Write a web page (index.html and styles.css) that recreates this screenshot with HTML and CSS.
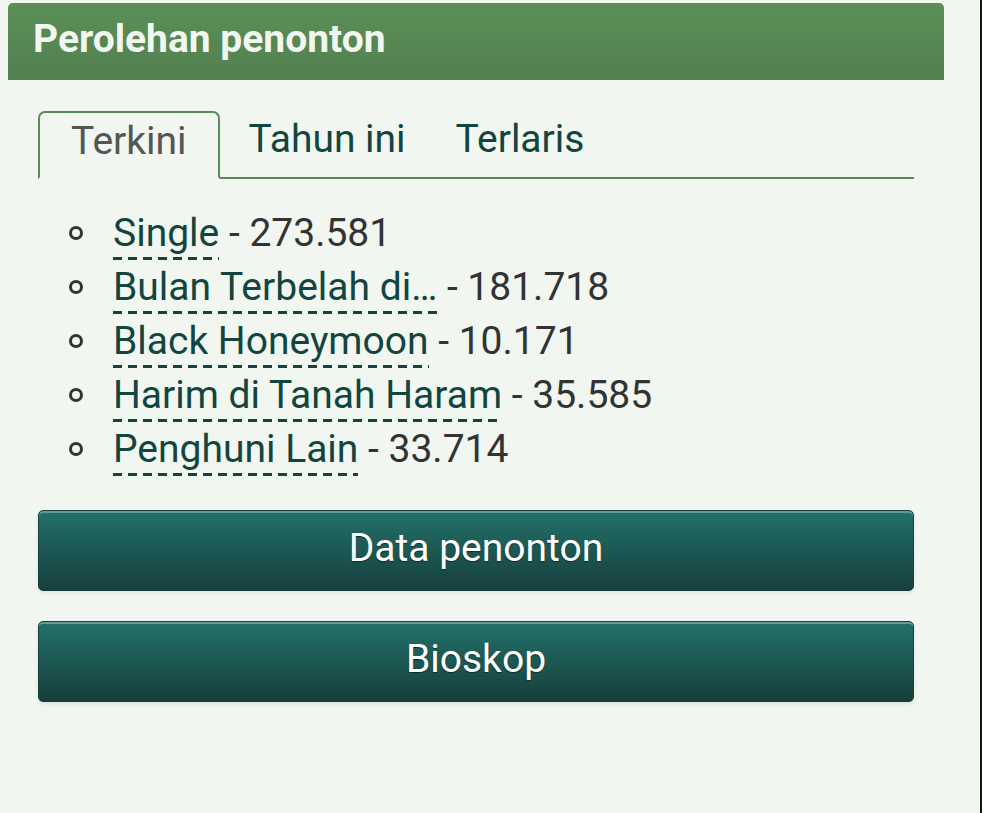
FILE: index.html
```html
<!DOCTYPE html>
<html lang="id">
<head>
  <meta charset="UTF-8" />
  <meta name="viewport" content="width=device-width, initial-scale=1.0"/>
  <title>Perolehan penonton</title>
  <link rel="stylesheet" href="styles.css">
</head>
<body>
  <div class="page">
    <h2 class="box-title">Perolehan penonton</h2>

    <div class="box-body">
      <ul class="tabs">
        <li class="tab active">Terkini</li>
        <li class="tab">Tahun ini</li>
        <li class="tab">Terlaris</li>
      </ul>

      <ul class="ranking">
        <li><a href="#">Single</a> - 273.581</li>
        <li><a href="#">Bulan Terbelah di…</a> - 181.718</li>
        <li><a href="#">Black Honeymoon</a> - 10.171</li>
        <li><a href="#">Harim di Tanah Haram</a> - 35.585</li>
        <li><a href="#">Penghuni Lain</a> - 33.714</li>
      </ul>

      <a class="btn" href="#">Data penonton</a>
      <a class="btn" href="#">Bioskop</a>
    </div>
  </div>
</body>
</html>
```

FILE: styles.css
```css
body {
  margin: 0;
  background: #f1f6f0;
  font-family: Roboto, "Liberation Sans", sans-serif;
}

.page {
  min-height: 100vh;
  box-sizing: border-box;
  border-right: 2px solid #141614;
  padding-top: 3px;
}

.box-title {
  margin: 0 36px 0 8px;
  height: 77px;
  box-sizing: border-box;
  padding: 14px 0 0 25px;
  background: linear-gradient(#5b8f57, #528050);
  border-radius: 5px 5px 0 0;
  color: #f2f6f0;
  font-size: 39px;
  font-weight: bold;
  line-height: 44px;
}

.box-body {
  padding: 31px 66px 0 38px;
}

/* tab strip */
.tabs {
  display: flex;
  margin: 0;
  padding: 0;
  list-style: none;
  border-bottom: 2px solid #5a8a56;
}

.tab {
  padding: 0 25px;
  height: 64px;
  line-height: 56px;
  font-size: 39px;
  color: #134540;
  cursor: pointer;
}

.tab.active {
  padding: 0 31px;
  margin-bottom: -2px;
  margin-right: 4px;
  border: 2px solid #5a8a56;
  border-bottom-color: #f1f6f0;
  border-radius: 7px 7px 0 0;
  color: #555;
}

/* list of films */
.ranking {
  margin: 27px 0 34px;
  padding-left: 75px;
  list-style: none;
  font-size: 39px;
  line-height: 54px;
  color: #333;
}

.ranking li::before {
  content: "";
  display: inline-block;
  width: 8px;
  height: 8px;
  margin-left: -44px;
  margin-right: 30px;
  border: 3px solid #333;
  border-radius: 50%;
  vertical-align: 6px;
}

.ranking a {
  padding-bottom: 4px;
  color: #134540;
  text-decoration: none;
  background: linear-gradient(to right, #134540 9px, transparent 9px) repeat-x left bottom / 15px 3px;
}

/* buttons */
.btn {
  display: block;
  height: 81px;
  box-sizing: border-box;
  margin-bottom: 30px;
  border: 1px solid #173f3b;
  border-radius: 5px;
  background: linear-gradient(#23716a, #163f3c);
  box-shadow: inset 0 2px 0 rgba(255, 255, 255, 0.3), 0 2px 4px rgba(0, 0, 0, 0.08);
  color: #fff;
  font-size: 39px;
  line-height: 74px;
  text-align: center;
  text-decoration: none;
  text-shadow: 0 1px 1px #0d2c29;
}
```
